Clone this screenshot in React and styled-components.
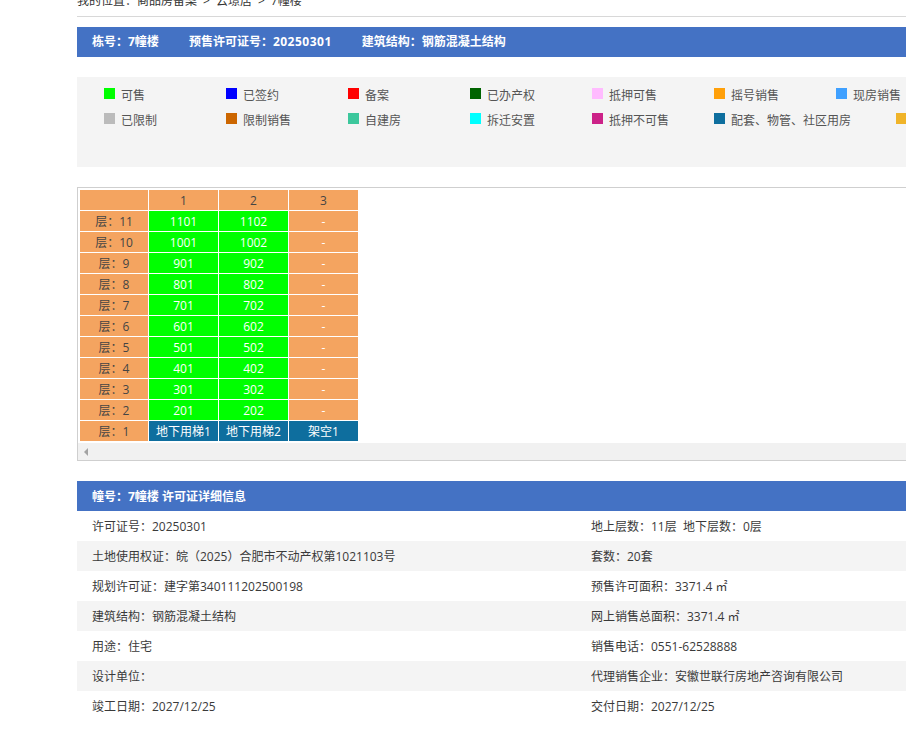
import React from "react";
import styled, { createGlobalStyle } from "styled-components";

const legendItems = [
  ["可售", "#00ff00"],
  ["已签约", "#0000ff"],
  ["备案", "#ff0000"],
  ["已办产权", "#006400"],
  ["抵押可售", "#ffbbff"],
  ["摇号销售", "#ffa00a"],
  ["现房销售", "#3fa0ff"],
  ["已限制", "#bbbbbb"],
  ["限制销售", "#cc6600"],
  ["自建房", "#3cc79c"],
  ["拆迁安置", "#00ffff"],
  ["抵押不可售", "#cc2288"],
  ["配套、物管、社区用房", "#0e6e9e"],
  ["", "#f0b429"],
];

const floors = [11, 10, 9, 8, 7, 6, 5, 4, 3, 2];

const details = [
  ["许可证号：20250301", "地上层数：11层  地下层数：0层"],
  ["土地使用权证：皖（2025）合肥市不动产权第1021103号", "套数：20套"],
  ["规划许可证：建字第340111202500198", "预售许可面积：3371.4 ㎡"],
  ["建筑结构：钢筋混凝土结构", "网上销售总面积：3371.4 ㎡"],
  ["用途：住宅", "销售电话：0551-62528888"],
  ["设计单位：", "代理销售企业：安徽世联行房地产咨询有限公司"],
  ["竣工日期：2027/12/25", "交付日期：2027/12/25"],
];

const App = () => {
  return (
    <Page>
      <GlobalStyle />
      <Content>
        <Breadcrumb>
          我的位置：商品房备案<Sep>&gt;</Sep>云璟居<Sep>&gt;</Sep>7幢楼
        </Breadcrumb>
        <TitleBar>
          <span>栋号：7幢楼</span>
          <span>
            预售许可证号：<TitleNumber>20250301</TitleNumber>
          </span>
          <span>建筑结构：钢筋混凝土结构</span>
        </TitleBar>
        <Legend>
          {legendItems.map(([label, color], i) => (
            <LegendItem key={i}>
              <Swatch color={color} />
              {label}
            </LegendItem>
          ))}
        </Legend>
        <TableBox>
          <FloorTable>
            <tbody>
              <tr>
                <Cell />
                <Cell>1</Cell>
                <Cell>2</Cell>
                <Cell>3</Cell>
              </tr>
              {floors.map((f) => (
                <tr key={f}>
                  <Cell>层：{f}</Cell>
                  <Cell kind="sale">{f}01</Cell>
                  <Cell kind="sale">{f}02</Cell>
                  <Cell kind="empty">-</Cell>
                </tr>
              ))}
              <tr>
                <Cell>层：1</Cell>
                <Cell kind="support">地下用梯1</Cell>
                <Cell kind="support">地下用梯2</Cell>
                <Cell kind="support">架空1</Cell>
              </tr>
            </tbody>
          </FloorTable>
          <ScrollBar>
            <ScrollArrow />
          </ScrollBar>
        </TableBox>
        <DetailHeader>幢号：7幢楼 许可证详细信息</DetailHeader>
        {details.map(([left, right], i) => (
          <DetailRow key={i} striped={i % 2 === 1}>
            <DetailCell>{left}</DetailCell>
            <DetailCell>{right}</DetailCell>
          </DetailRow>
        ))}
      </Content>
    </Page>
  );
};

export default App;

const GlobalStyle = createGlobalStyle`
  html, body {
    margin: 0;
    padding: 0;
    background: #fff;
    overflow: hidden;
  }
  body {
    font-family: "Open Sans", "Noto Sans CJK SC", sans-serif;
    font-size: 12px;
    color: #3a3a3a;
  }
`;

const Page = styled.div`
  width: 906px;
  height: 734px;
  overflow: hidden;
`;

const Content = styled.div`
  width: 1000px;
  margin: -14px 0 0 77px;
`;

const Breadcrumb = styled.div`
  height: 30px;
  line-height: 30px;
  border-bottom: 1px solid #d8d8d8;
  color: #333;
`;

const Sep = styled.span`
  margin: 0 6px;
`;

const TitleBar = styled.div`
  display: flex;
  gap: 30px;
  height: 30px;
  line-height: 30px;
  margin-top: 10px;
  padding-left: 15px;
  background: #4472c4;
  color: #fff;
  font-weight: bold;
`;

const TitleNumber = styled.span`
  letter-spacing: 0.5px;
`;

const Legend = styled.div`
  display: flex;
  flex-wrap: wrap;
  align-content: flex-start;
  box-sizing: border-box;
  height: 90px;
  margin-top: 20px;
  padding: 5px 0 0 27px;
  background: #f4f4f4;
`;

const LegendItem = styled.div`
  display: flex;
  align-items: center;
  min-width: 122px;
  height: 25px;
  box-sizing: border-box;
  padding-right: 45px;
  color: #555;
`;

const Swatch = styled.i`
  width: 11px;
  height: 11px;
  margin: -2px 6px 0 0;
  background: ${(p) => p.color};
`;

const TableBox = styled.div`
  box-sizing: border-box;
  height: 274px;
  margin-top: 20px;
  padding: 1px 0 0 1px;
  border: 1px solid #cfcfcf;
`;

const FloorTable = styled.table`
  border-collapse: separate;
  border-spacing: 1px;
  table-layout: fixed;
  width: 280px;
`;

const cellBackgrounds = {
  sale: "#00ff00",
  empty: "#f4a460",
  support: "#0e6e9e",
};

const Cell = styled.td`
  height: 19px;
  padding: 1px 0 0;
  text-align: center;
  line-height: 19px;
  background: ${(p) => cellBackgrounds[p.kind] || "#f4a460"};
  color: ${(p) => (p.kind ? "#fff" : "#444")};

  &:first-child {
    width: 68px;
  }
`;

const ScrollBar = styled.div`
  display: flex;
  align-items: center;
  height: 17px;
  margin: 1px 0 0 -1px;
  padding-left: 6px;
  background: #f1f1f1;
`;

const ScrollArrow = styled.i`
  border-top: 4px solid transparent;
  border-bottom: 4px solid transparent;
  border-right: 4px solid #a3a3a3;
`;

const DetailHeader = styled.div`
  box-sizing: border-box;
  height: 30px;
  line-height: 30px;
  margin-top: 20px;
  padding: 1px 0 0 15px;
  background: #4472c4;
  color: #fff;
  font-weight: bold;
`;

const DetailRow = styled.div`
  box-sizing: border-box;
  display: flex;
  height: 30px;
  line-height: 30px;
  padding: 1px 0 0 15px;
  background: ${(p) => (p.striped ? "#f4f4f4" : "#fff")};
`;

const DetailCell = styled.div`
  flex: none;
  width: 499px;
  white-space: pre;
`;
